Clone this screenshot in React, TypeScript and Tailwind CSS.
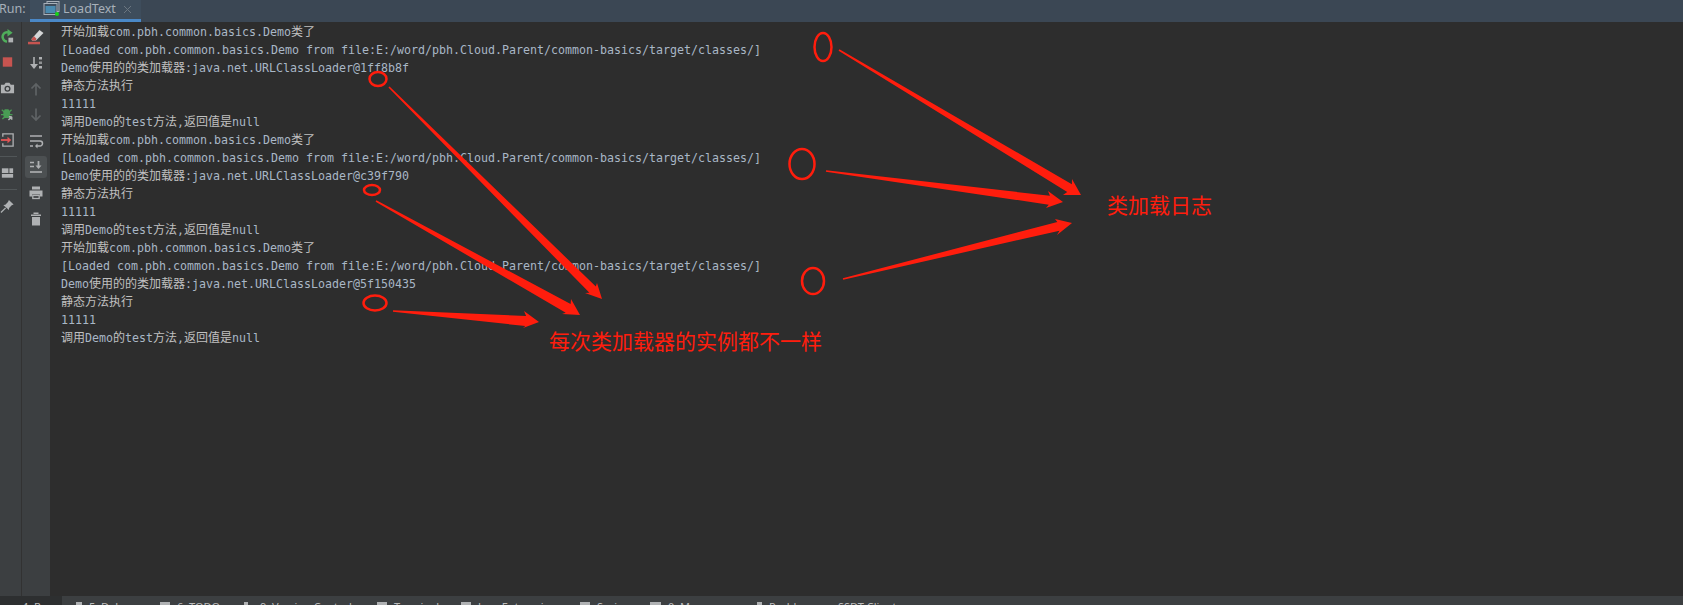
import React from "react";

const G = "#afb1b3";
const lines = [
  "开始加载com.pbh.common.basics.Demo类了",
  "[Loaded com.pbh.common.basics.Demo from file:E:/word/pbh.Cloud.Parent/common-basics/target/classes/]",
  "Demo使用的的类加载器:java.net.URLClassLoader@1ff8b8f",
  "静态方法执行",
  "11111",
  "调用Demo的test方法,返回值是null",
  "开始加载com.pbh.common.basics.Demo类了",
  "[Loaded com.pbh.common.basics.Demo from file:E:/word/pbh.Cloud.Parent/common-basics/target/classes/]",
  "Demo使用的的类加载器:java.net.URLClassLoader@c39f790",
  "静态方法执行",
  "11111",
  "调用Demo的test方法,返回值是null",
  "开始加载com.pbh.common.basics.Demo类了",
  "[Loaded com.pbh.common.basics.Demo from file:E:/word/pbh.Cloud.Parent/common-basics/target/classes/]",
  "Demo使用的的类加载器:java.net.URLClassLoader@5f150435",
  "静态方法执行",
  "11111",
  "调用Demo的test方法,返回值是null",
];

function ConsoleLine({ text }: { text: string }) {
  const parts = text.split(/([\u4e00-\u9fff]+)/).filter(Boolean);
  return (
    <div className="h-[18px] leading-[18px] whitespace-pre">
      {parts.map((p, i) =>
        /[\u4e00-\u9fff]/.test(p) ? (
          <span key={i} className="text-[12px] text-[#c0c0c0]">{p}</span>
        ) : (
          <span key={i} className="text-[11.63px] text-[#a9b7c6]">{p}</span>
        )
      )}
    </div>
  );
}

const I = ({ children }: { children: React.ReactNode }) => (
  <svg width="16" height="16" viewBox="0 0 16 16" fill="none">{children}</svg>
);

const Rerun = () => (
  <I>
    <path d="M7.500 14A5.200 5.200 0 0 1 4 5.500 5 5 0 0 1 8.500 4.200" stroke="#4fae5b" strokeWidth="2.600" />
    <path d="M8 0.500 13.500 4.500 8 8.500Z" fill="#4fae5b" />
    <rect x="9" y="9.800" width="5" height="5" fill={G} />
  </I>
);
const Stop = () => (
  <I><rect x="3" y="3" width="10" height="10" fill="#c75450" /></I>
);
const Camera = () => (
  <I>
    <path d="M1 4.500h3.500L6 2.500h4l1.500 2H15v9H1Z" fill={G} />
    <circle cx="8" cy="8.800" r="3.200" fill="#3c3f41" />
    <circle cx="8" cy="8.800" r="1.800" fill={G} />
  </I>
);
const Bug = () => (
  <I>
    <path d="M5 3h4l1 1.500 2-1.500 .8 1-2 1.800V8h2.500v1.200H10.500L10 11l2 1.800-1 1-2-1.500H5L3 13.800l-1-1L4 11l-.5-1.800H1V8h2.500V5.800l-2-1.800 .8-1 2 1.500Z" fill="#499c54" />
    <path d="M9 14.500l3.500-3.500m0 0H9.500m3 0v3" stroke={G} strokeWidth="1.500" />
  </I>
);
const ExitIcon = () => (
  <I>
    <path d="M3 4.500V1.500h11v13H3v-3" stroke={G} strokeWidth="1.400" />
    <path d="M1 8h8.500" stroke="#e05555" strokeWidth="2" />
    <path d="M8 4.500 12 8l-4 3.500Z" fill="#e05555" />
  </I>
);
const LayoutIcon = () => (
  <I>
    <rect x="2" y="3" width="7" height="5" fill={G} />
    <rect x="10" y="3" width="4" height="5" fill={G} />
    <rect x="2" y="9" width="12" height="4" fill={G} />
  </I>
);
const Pin = () => (
  <I>
    <path d="M9.500 1.500 14.500 6.500l-2 .8-2.800 2.800-.2 2.200L3.500 6.800l2.200-.2L8.500 3.700Z" fill={G} />
    <path d="M6 10 1 15" stroke={G} strokeWidth="1.400" />
  </I>
);
const Eraser = () => (
  <I>
    <path d="M3.500 10 11.500 1 15.500 4 8 11.500H4Z" fill="#d4d6d7" />
    <path d="M3.500 10 6 7.200l2.500 2.500-1 1.800H4Z" fill="#c75450" />
    <rect x="0" y="12.800" width="12" height="2.500" fill="#c75450" />
  </I>
);
const Sort = () => (
  <I>
    <path d="M6 2v8" stroke={G} strokeWidth="1.600" />
    <path d="M2 9h8l-4 5Z" fill={G} />
    <rect x="11" y="2" width="3" height="2.500" fill={G} />
    <rect x="11" y="6.500" width="3" height="2.500" fill="#8f9193" />
    <rect x="11" y="11" width="3" height="2.500" fill={G} />
  </I>
);
const Up = () => (
  <I>
    <path d="M8 14.500V3M3.500 7.500 8 3l4.500 4.500" stroke="#5f6365" strokeWidth="1.700" />
  </I>
);
const Down = () => (
  <I>
    <path d="M8 1.500V13M3.500 8.500 8 13l4.500-4.500" stroke="#5f6365" strokeWidth="1.700" />
  </I>
);
const Wrap = () => (
  <I>
    <path d="M2 3h12" stroke={G} strokeWidth="1.500" />
    <path d="M2 8h10a2.300 2.300 0 0 1 0 5H8" stroke={G} strokeWidth="1.500" />
    <path d="M2 13h3" stroke={G} strokeWidth="1.500" />
    <path d="M9.500 10.500 7 13l2.500 2.500Z" fill={G} />
  </I>
);
const ScrollEnd = () => (
  <I>
    <path d="M2 3.500h4M2 7.500h4" stroke={G} strokeWidth="1.400" />
    <path d="M2 13h12" stroke={G} strokeWidth="1.600" />
    <path d="M10.500 2v5" stroke={G} strokeWidth="1.800" />
    <path d="M7.500 6.500h6l-3 3.500Z" fill={G} />
  </I>
);
const Printer = () => (
  <I>
    <rect x="4" y="1.500" width="8" height="3" fill={G} />
    <path d="M1.500 5.500h13v6H12v-2H4v2H1.500Z" fill={G} />
    <rect x="4.800" y="10.500" width="6.400" height="3" stroke={G} strokeWidth="1.300" />
  </I>
);
const Trash = () => (
  <I>
    <rect x="5.500" y="1.500" width="5" height="1.500" fill={G} />
    <rect x="3" y="3.500" width="10" height="1.500" fill={G} />
    <path d="M4 6h8v8.500H4Z" fill={G} />
  </I>
);

const Btn = ({ children }: { children: React.ReactNode }) => (
  <div className="h-[26px] flex items-center justify-center">{children}</div>
);

type P = [number, number];
function arrowPoints(s: P, t: P, b1: P, b2: P, w: number) {
  const dx = t[0] - s[0], dy = t[1] - s[1];
  const len = Math.hypot(dx, dy);
  const ux = dx / len, uy = dy / len;
  const mx = (b1[0] + b2[0]) / 2, my = (b1[1] + b2[1]) / 2;
  const h = (t[0] - mx) * ux + (t[1] - my) * uy;
  const nx = t[0] - ux * h * 0.85, ny = t[1] - uy * h * 0.85;
  const px = -uy, py = ux;
  const sgn = (b1[0] - mx) * px + (b1[1] - my) * py > 0 ? 1 : -1;
  const side = (c: P, d: number): P => [c[0] + px * sgn * d, c[1] + py * sgn * d];
  const pts: P[] = [
    side(s, 0.8),
    side([nx, ny], w / 2),
    b1,
    t,
    b2,
    side([nx, ny], -w / 2),
    side(s, -0.8),
  ];
  return pts.map((p) => `${p[0]},${p[1]}`).join(" ");
}

const arrows: [P, P, P, P, number][] = [
  [[839, 50], [1081, 195], [1072, 179], [1063, 195], 9],
  [[826, 171], [1063, 202], [1048, 191], [1046, 208], 9],
  [[843, 279], [1072, 223], [1055, 219], [1057, 235], 9],
  [[389, 87], [602, 299], [597, 283], [585, 293], 9],
  [[376, 201], [580, 315], [571, 299], [562, 314], 10],
  [[393, 311], [539, 322], [524, 311], [523, 328], 10],
];
const ellipses: [number, number, number, number][] = [
  [823, 47, 8.500, 14],
  [802, 164, 12.500, 15],
  [813, 281, 11, 13],
  [378, 79, 8.500, 7],
  [372, 190, 8, 5],
  [375, 303, 11.500, 7.500],
];

const tools = [
  { label: "5: Debug", box: "w-[98px] pl-[14px]", icon: "w-[6px]" },
  { label: "6: TODO", box: "w-[84px]", icon: "w-[10px]" },
  { label: "9: Version Control", box: "w-[133px]", icon: "w-[4px] mr-[5px]" },
  { label: "Terminal", box: "w-[84px]", icon: "w-[10px]" },
  { label: "Java Enterprise", box: "w-[119px]", icon: "w-[10px]" },
  { label: "Spring", box: "w-[70px]", icon: "w-[10px]" },
  { label: "0: Messages", box: "w-[107px]", icon: "w-[11px]" },
  { label: "Problems", box: "w-[81px]", icon: "w-[5px]" },
];

export default function App() {
  return (
    <div className="relative w-[1683px] h-[605px] overflow-hidden flex flex-col bg-[#2d2d2d] font-['Noto_Sans',sans-serif]">
      <header className="h-[22px] shrink-0 flex bg-[#3b4754] text-[12.5px] text-[#a7b0b9]">
        <div className="w-[31px] -ml-[1px] leading-[18px]">Run:</div>
        <div className="w-[111px] h-[22px] flex items-start border-b-[3px] border-[#4a88c7] bg-[#3e4d5c] pl-[13px]">
          <svg width="18" height="18" viewBox="0 0 17 18" fill="none" className="shrink-0">
            <rect x="3.500" y="1.500" width="12" height="10" stroke="#a7b0b9" />
            <rect x="0.500" y="3.500" width="13" height="11" fill="#3e4d5c" stroke="#a7b0b9" />
            <rect x="2" y="6" width="10" height="7" fill="#4a8bb0" />
            <circle cx="13.500" cy="14" r="2" fill="#15d615" />
          </svg>
          <span className="ml-[2px] leading-[18px]">LoadText</span>
          <svg width="9" height="9" viewBox="0 0 9 9" className="ml-[7px] mt-[5px]">
            <path d="M1 1l7 7M8 1l-7 7" stroke="#6b7680" strokeWidth="1" />
          </svg>
        </div>
      </header>

      <div className="flex-1 flex min-h-0">
        <div className="w-[22px] pt-px bg-[#3c3f41] border-r border-[#323232] flex flex-col">
          <div className="w-[15px] flex flex-col">
            <Btn><Rerun /></Btn>
            <Btn><Stop /></Btn>
            <Btn><Camera /></Btn>
            <Btn><Bug /></Btn>
            <Btn><ExitIcon /></Btn>
          </div>
          <div className="h-px my-[3px] w-[17px] bg-[#515658]" />
          <div className="w-[15px] flex flex-col">
            <Btn><LayoutIcon /></Btn>
          </div>
          <div className="h-px my-[3px] w-[17px] bg-[#515658]" />
          <div className="w-[15px] flex flex-col">
            <Btn><Pin /></Btn>
          </div>
        </div>
        <div className="w-[28px] pt-[2px] bg-[#3c3f41] flex flex-col items-center">
          <Btn><Eraser /></Btn>
          <Btn><Sort /></Btn>
          <Btn><Up /></Btn>
          <Btn><Down /></Btn>
          <Btn><Wrap /></Btn>
          <Btn>
            <div className="w-[22px] h-[22px] rounded-[3px] bg-[#4c5052] flex items-center justify-center">
              <ScrollEnd />
            </div>
          </Btn>
          <Btn><Printer /></Btn>
          <Btn><Trash /></Btn>
        </div>
        <main className="flex-1 pl-[11px] bg-[#2d2d2d] font-['DejaVu_Sans_Mono','Noto_Sans_CJK_SC',monospace]">
          {lines.map((l, i) => (
            <ConsoleLine key={i} text={l} />
          ))}
        </main>
      </div>

      <footer className="h-[9px] shrink-0 flex bg-[#3c3f41] text-[11px] leading-[16px] text-[#bbbbbb] overflow-hidden">
        <div className="w-[62px] bg-[#2d2f30] pl-[22px] pt-[3px]">4: Run</div>
        {tools.map((t) => (
          <div key={t.label} className={`${t.box} flex gap-[7px] pt-[3px] whitespace-pre shrink-0`}>
            <div className={`${t.icon} h-[8px] mt-[3px] bg-[#afb1b3]`} />
            <span>{t.label}</span>
          </div>
        ))}
        <div className="pt-[3px] whitespace-pre">SSDT Client</div>
      </footer>

      <svg className="absolute left-0 top-0 pointer-events-none" width="1683" height="605" viewBox="0 0 1683 605">
        {arrows.map(([s, t, b1, b2, w], i) => (
          <polygon key={i} points={arrowPoints(s, t, b1, b2, w)} fill="#ff1d0d" />
        ))}
        {ellipses.map(([cx, cy, rx, ry], i) => (
          <ellipse key={i} cx={cx} cy={cy} rx={rx} ry={ry} fill="none" stroke="#ff1d0d" strokeWidth="2.500" />
        ))}
      </svg>
      <div className="absolute left-[1107px] top-[190px] text-[21px] leading-[28px] text-[#ff1d0d] font-['Noto_Sans_CJK_SC',sans-serif] font-normal">类加载日志</div>
      <div className="absolute left-[549px] top-[326px] text-[21px] leading-[28px] text-[#ff1d0d] font-['Noto_Sans_CJK_SC',sans-serif] font-normal whitespace-pre">每次类加载器的实例都不一样</div>
    </div>
  );
}
